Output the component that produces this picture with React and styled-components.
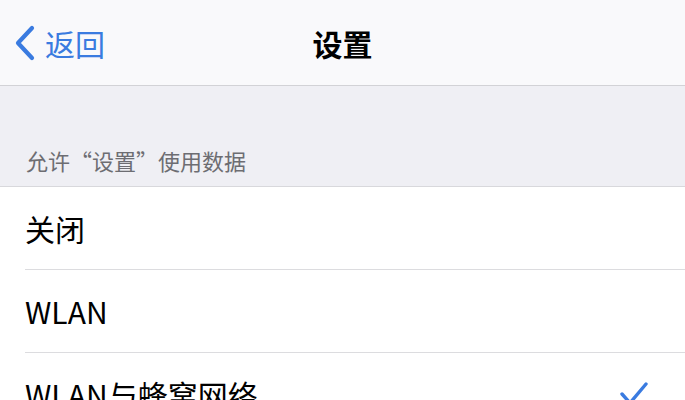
import React from "react";
import styled, { createGlobalStyle } from "styled-components";

const Global = createGlobalStyle`
  html, body { margin: 0; padding: 0; background: #efeff4; }
  body { font-family: "Noto Sans CJK SC", "Noto Sans", sans-serif; overflow: hidden; }
`;

const Page = styled.div`
  width: 685px;
  height: 400px;
  overflow: hidden;
  background: #efeff4;
`;

const NavBar = styled.header`
  height: 85px;
  background: #f9f9fb;
  border-bottom: 1px solid #d2d2d6;
  display: grid;
  grid-template-columns: 1fr auto 1fr;
  align-items: center;
  padding: 0 14px;
  box-sizing: content-box;
`;

const Back = styled.div`
  display: flex;
  align-items: center;
  gap: 9px;
  color: #3a7be0;
  font-size: 30px;
  line-height: 1;
`;

const Title = styled.h1`
  margin: 0;
  font-size: 30px;
  font-weight: 700;
  color: #000;
  line-height: 1;
`;

const SectionHeader = styled.div`
  height: 101px;
  display: flex;
  align-items: flex-end;
  padding: 0 26px 12px;
  box-sizing: border-box;
  font-size: 22px;
  color: #6d6d72;
  line-height: 28px;
  border-bottom: 1px solid #d8d8dc;
`;

const List = styled.div`
  background: #fff;
`;

const Row = styled.div`
  height: 82px;
  display: flex;
  align-items: center;
  justify-content: space-between;
  margin-left: 25px;
  padding-right: 36px;
  border-bottom: 1px solid #dcdcdf;
  font-size: 30px;
  color: #000;
  line-height: 1;
`;

const Check = () => (
  <svg width="30" height="26" viewBox="0 0 30 26" fill="none">
    <path d="M3 13 L11 22 L27 3" stroke="#3a7be0" strokeWidth="3.4" strokeLinecap="round" strokeLinejoin="round" />
  </svg>
);

const Chevron = () => (
  <svg width="22" height="36" viewBox="0 0 22 36" fill="none">
    <path d="M18 3 L4 18 L18 33" stroke="#3a7be0" strokeWidth="4.2" strokeLinecap="round" strokeLinejoin="round" />
  </svg>
);

const items = [
  { label: "关闭" },
  { label: "WLAN" },
  { label: "WLAN与蜂窝网络", checked: true },
];

export default function App() {
  return (
    <Page>
      <Global />
      <NavBar>
        <Back>
          <Chevron />
          <span>返回</span>
        </Back>
        <Title>设置</Title>
        <div />
      </NavBar>
      <SectionHeader>允许“设置”使用数据</SectionHeader>
      <List>
        {items.map((it) => (
          <Row key={it.label}>
            <span>{it.label}</span>
            {it.checked && <Check />}
          </Row>
        ))}
      </List>
    </Page>
  );
}
